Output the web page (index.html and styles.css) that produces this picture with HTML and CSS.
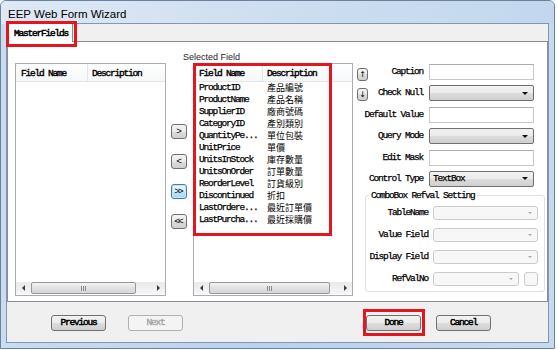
FILE: index.html
```html
<!DOCTYPE html>
<html lang="en">
<head>
    <meta charset="UTF-8">
    <title>EEP Web Form Wizard</title>
    <link rel="stylesheet" href="styles.css">
</head>
<body>
    <div class="window">
        <div class="titlebar">EEP Web Form Wizard</div>
        <div class="client">
            <div class="tabstrip">
                <div class="tab marked">MasterFields</div>
            </div>

            <div class="tabpage">
                <div class="listview list-left">
                    <div class="lv-head">
                        <span class="col-name">Field Name</span>
                        <span class="col-desc">Description</span>
                    </div>
                    <div class="lv-body"></div>
                    <div class="hscroll">
                        <span class="sb-arrow"><i class="tri-left"></i></span>
                        <span class="sb-thumb"><i class="grip"></i></span>
                        <span class="sb-track"></span>
                        <span class="sb-arrow"><i class="tri-right"></i></span>
                    </div>
                </div>

                <div class="move-buttons">
                    <button class="btn btn-small">&gt;</button>
                    <button class="btn btn-small">&lt;</button>
                    <button class="btn btn-small focused">&gt;&gt;</button>
                    <button class="btn btn-small">&lt;&lt;</button>
                </div>

                <div class="selected">
                    <div class="group-label">Selected Field</div>
                    <div class="listview list-mid marked">
                        <div class="lv-head">
                            <span class="col-name">Field Name</span>
                            <span class="col-desc">Description</span>
                        </div>
                        <div class="lv-body">
                            <div class="lv-row"><span class="col-name">ProductID</span><span class="col-desc cjk">產品編號</span></div>
                            <div class="lv-row"><span class="col-name">ProductName</span><span class="col-desc cjk">產品名稱</span></div>
                            <div class="lv-row"><span class="col-name">SupplierID</span><span class="col-desc cjk">廠商號碼</span></div>
                            <div class="lv-row"><span class="col-name">CategoryID</span><span class="col-desc cjk">產別類別</span></div>
                            <div class="lv-row"><span class="col-name">QuantityPe...</span><span class="col-desc cjk">單位包裝</span></div>
                            <div class="lv-row"><span class="col-name">UnitPrice</span><span class="col-desc cjk">單價</span></div>
                            <div class="lv-row"><span class="col-name">UnitsInStock</span><span class="col-desc cjk">庫存數量</span></div>
                            <div class="lv-row"><span class="col-name">UnitsOnOrder</span><span class="col-desc cjk">訂單數量</span></div>
                            <div class="lv-row"><span class="col-name">ReorderLevel</span><span class="col-desc cjk">訂貨級別</span></div>
                            <div class="lv-row"><span class="col-name">Discontinued</span><span class="col-desc cjk">折扣</span></div>
                            <div class="lv-row"><span class="col-name">LastOrdere...</span><span class="col-desc cjk">最近訂單價</span></div>
                            <div class="lv-row"><span class="col-name">LastPurcha...</span><span class="col-desc cjk">最近採購價</span></div>
                        </div>
                        <div class="hscroll">
                            <span class="sb-arrow"><i class="tri-left"></i></span>
                            <span class="sb-thumb"><i class="grip"></i></span>
                            <span class="sb-track"></span>
                            <span class="sb-arrow"><i class="tri-right"></i></span>
                        </div>
                    </div>
                </div>

                <div class="order-buttons">
                    <button class="btn btn-tiny">↑</button>
                    <button class="btn btn-tiny">↓</button>
                </div>

                <div class="props">
                    <div class="prop-grid">
                        <label>Caption</label>
                        <div class="textbox"></div>
                        <label>Check Null</label>
                        <div class="combo"><span></span><i class="drop"></i></div>
                        <label>Default Value</label>
                        <div class="textbox"></div>
                        <label>Query Mode</label>
                        <div class="combo"><span></span><i class="drop"></i></div>
                        <label>Edit Mask</label>
                        <div class="textbox"></div>
                        <label>Control Type</label>
                        <div class="combo"><span>TextBox</span><i class="drop"></i></div>
                    </div>

                    <fieldset class="refval">
                        <legend>ComboBox Refval Setting</legend>
                        <div class="refval-grid">
                            <label>TableName</label>
                            <div class="combo disabled"><span></span><i class="drop"></i></div>
                            <label>Value Field</label>
                            <div class="combo disabled"><span></span><i class="drop"></i></div>
                            <label>Display Field</label>
                            <div class="combo disabled"><span></span><i class="drop"></i></div>
                            <label>RefValNo</label>
                            <div class="refno">
                                <div class="combo disabled"><span></span><i class="drop"></i></div>
                                <div class="btn-blank"></div>
                            </div>
                        </div>
                    </fieldset>
                </div>
            </div>

            <div class="footer">
                <button class="btn btn-wide">Previous</button>
                <button class="btn btn-wide" disabled>Next</button>
                <button class="btn btn-wide btn-done marked">Done</button>
                <button class="btn btn-wide">Cancel</button>
            </div>
        </div>
    </div>
</body>
</html>
```

FILE: styles.css
```css
body {
    margin: 0;
    background: #fff;
}

.window {
    width: 555px;
    height: 349px;
    box-sizing: border-box;
    padding: 0 6px 6px;
    border: 1px solid #6b829e;
    border-radius: 6px 6px 0 0;
    background: linear-gradient(to right, #c9dcf0, #bcd2ec 50%, #c6daef);
    display: flex;
    flex-direction: column;
}

.titlebar {
    height: 23px;
    line-height: 27px;
    font-family: "Liberation Sans", "Open Sans", sans-serif;
    font-size: 11.5px;
    color: #000;
    background: linear-gradient(to right, #dfe9f5, #cfdff1 45%, #c2d7ee);
    margin: 0 -6px;
    padding-left: 7px;
    border-radius: 5px 5px 0 0;
}

.client {
    flex: 1;
    display: flex;
    flex-direction: column;
    background: #f0f0f0;
    box-shadow: 0 0 0 1px #7f98b8;
}

/* shared small text, looks like NSimSun 9px */
.tab,
.lv-head,
.lv-row,
.btn,
.prop-grid label,
.refval-grid label,
.refval legend,
.combo span {
    font-family: "Liberation Mono", "Noto Sans CJK TC", monospace;
    font-size: 9.5px;
    letter-spacing: -1.2px;
    color: #000;
    -webkit-text-stroke: 0.25px #000;
}

.cjk {
    font-family: "Noto Sans CJK TC", sans-serif;
    letter-spacing: 0;
    font-size: 9px;
    -webkit-text-stroke: 0;
}

.marked {
    position: relative;
}

.marked::after {
    content: "";
    position: absolute;
    border: 3px solid #e3151e;
    box-sizing: border-box;
    pointer-events: none;
}

/* tabs */
.tabstrip {
    height: 17px;
    display: flex;
    align-items: flex-end;
}

.tab {
    height: 19px;
    margin-left: 1px;
    margin-bottom: -1px;
    width: 65px;
    box-sizing: border-box;
    padding: 4px 0 0 5px;
    background: #fff;
    border: 1px solid #898c95;
    border-bottom: none;
    z-index: 1;
    -webkit-text-stroke: 0.5px #000;
}

.tab.marked::after {
    left: -3px;
    top: -3px;
    right: -5px;
    bottom: -5px;
}

.tabpage {
    height: 261px;
    box-sizing: border-box;
    border: 1px solid #898c95;
    background: #fff;
    display: flex;
    align-items: flex-start;
    padding: 0 2px 0 7px;
}

.tabpage > * {
    flex: none;
}

/* list views */
.listview {
    height: 233px;
    box-sizing: border-box;
    border: 1px solid #a9acb2;
    display: flex;
    flex-direction: column;
    background: #fff;
}

.list-left {
    width: 151px;
    margin-top: 21px;
}

.list-mid {
    width: 160px;
}

.list-mid.marked::after {
    left: -1px;
    top: -1px;
    width: 139px;
    height: 173px;
}

.lv-head {
    height: 18px;
    display: flex;
    box-sizing: border-box;
    background: linear-gradient(#fff, #f6f7f9);
    border-bottom: 1px solid #e3e5e8;
    -webkit-text-stroke: 0.4px #000;
}

.lv-head span {
    padding-top: 4px;
    line-height: 12px;
}

.lv-head .col-name {
    border-right: 1px solid #e3e5e8;
}

.lv-row {
    display: flex;
    height: 12px;
    line-height: 12px;
}

.col-name {
    padding-left: 5px;
    box-sizing: border-box;
    flex: none;
}

.list-left .col-name {
    width: 72px;
}

.list-mid .col-name {
    width: 69px;
}

.col-desc {
    padding-left: 4px;
}

.lv-body {
    flex: 1;
}

.hscroll {
    height: 12px;
    margin-bottom: 1px;
    display: flex;
    background: linear-gradient(#eaeaea, #f5f5f5);
}

.sb-arrow {
    width: 14px;
    display: flex;
    align-items: center;
    justify-content: center;
}

.tri-left {
    border-right: 3px solid #3a3a3a;
    border-top: 3px solid transparent;
    border-bottom: 3px solid transparent;
}

.tri-right {
    border-left: 3px solid #3a3a3a;
    border-top: 3px solid transparent;
    border-bottom: 3px solid transparent;
}

.sb-thumb {
    margin-left: 1px;
    box-sizing: border-box;
    border: 1px solid #979797;
    border-radius: 2px;
    background: linear-gradient(#f4f4f4, #e2e2e2 50%, #d6d6d6);
    display: flex;
    align-items: center;
    justify-content: center;
}

.list-left .sb-thumb {
    width: 105px;
}

.list-mid .sb-thumb {
    width: 121px;
}

.grip {
    width: 5px;
    height: 5px;
    background: repeating-linear-gradient(to right, #8a8a8a 0 1px, transparent 1px 2px);
}

.sb-track {
    flex: 1;
}

/* buttons */
.btn {
    box-sizing: border-box;
    border: 1px solid #707070;
    border-radius: 3px;
    background: linear-gradient(#f2f2f2, #ebebeb 50%, #dddddd 50%, #cfcfcf);
    padding: 0;
    margin: 0;
    line-height: 12px;
    -webkit-text-stroke: 0.5px #000;
}

.btn:disabled {
    border-color: #adb2b5;
    background: #f4f4f4;
    color: #a0a0a0;
    -webkit-text-stroke: 0.3px #a0a0a0;
}

.move-buttons {
    margin-left: 5px;
    padding-top: 82px;
    display: flex;
    flex-direction: column;
    gap: 15px;
}

.btn-small {
    width: 16px;
    height: 15px;
    letter-spacing: -2px;
    padding-right: 2px;
    -webkit-text-stroke: 0;
}

.btn-small.focused {
    border-color: #3c7fb1;
    background: linear-gradient(#eaf6fd, #d9f0fc 50%, #bee6fd 50%, #a7d9f5);
    box-shadow: inset 0 0 0 1px #c3e4f8;
}

.selected {
    margin-left: 6px;
    margin-top: 10px;
}

.group-label {
    margin-left: -10px;
    height: 11px;
    line-height: 11px;
    font-family: "Liberation Sans", "Open Sans", sans-serif;
    font-size: 9px;
    color: #1e1e1e;
}

.order-buttons {
    margin-left: 4px;
    margin-top: 26px;
    display: flex;
    flex-direction: column;
    gap: 7px;
}

.btn-tiny {
    width: 11px;
    height: 13px;
    font-family: "DejaVu Sans", sans-serif;
    font-size: 8px;
    letter-spacing: 0;
    -webkit-text-stroke: 0;
}

/* property form */
.props {
    flex: 1 1 0 !important;
    min-width: 0;
    margin-top: 22px;
}

.prop-grid {
    display: grid;
    grid-template-columns: 1fr 105px;
    grid-auto-rows: 16px;
    column-gap: 6px;
    row-gap: 5.4px;
    padding-right: 11px;
}

.prop-grid label,
.refval-grid label {
    text-align: right;
    white-space: nowrap;
    line-height: 16px;
    min-width: 0;
    direction: rtl;
}

.textbox {
    box-sizing: border-box;
    border: 1px solid #c5c8cd;
    border-top-color: #abadb3;
    background: #fff;
}

.combo {
    box-sizing: border-box;
    border: 1px solid #707070;
    border-radius: 2px;
    background: linear-gradient(#f2f2f2, #ebebeb 50%, #dddddd 50%, #cfcfcf);
    display: flex;
    align-items: center;
    padding: 0 5px 0 3px;
}

.combo span {
    flex: 1;
    line-height: 12px;
}

.drop {
    border-top: 3px solid #111;
    border-left: 3px solid transparent;
    border-right: 3px solid transparent;
}

.combo.disabled {
    border-color: #c9cbce;
    background: #f7f7f7;
    border-radius: 3px;
}

.combo.disabled .drop {
    border-top-color: #a9a9a9;
    border-left-width: 2.5px;
    border-right-width: 2.5px;
    border-top-width: 2.5px;
}

.refval {
    margin: 4px 0 0 -3px;
    padding: 5px 6px 5px 0;
    border: 1px solid #dcdfe3;
    border-radius: 3px;
}

.refval legend {
    margin-left: 3px;
    padding: 0 2px;
    line-height: 10px;
}

.refval-grid {
    display: grid;
    grid-template-columns: 1fr 105px;
    grid-auto-rows: 14px;
    column-gap: 5px;
    row-gap: 8px;
}

.refval-grid label {
    line-height: 14px;
}

.refno {
    display: flex;
    gap: 5px;
}

.refno .combo {
    flex: 1;
}

.btn-blank {
    width: 14px;
    box-sizing: border-box;
    border: 1px solid #c9cbce;
    border-radius: 3px;
    background: #f7f7f7;
}

/* bottom buttons */
.footer {
    flex: 1;
    display: flex;
    align-items: flex-start;
    padding: 13px 57px 0 44px;
}

.btn-wide {
    width: 55px;
    height: 16px;
}

.btn-wide + .btn-wide {
    margin-left: 22px;
}

.btn-done {
    margin-left: auto !important;
}

.btn-done + .btn-wide {
    margin-left: 15px;
}

.btn-done.marked::after {
    left: -4px;
    right: -5px;
    top: -7px;
    bottom: -6px;
}
```
